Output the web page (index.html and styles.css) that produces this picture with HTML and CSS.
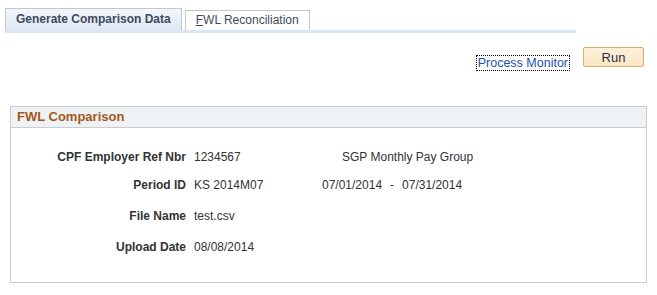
FILE: index.html
```html
<!DOCTYPE html>
<html lang="en">
<head>
  <title>Generate Comparison Data</title>
  <meta charset="utf-8">
  <link rel="stylesheet" href="styles.css">
</head>
<body>
  <div class="tabs">
    <span class="tab active">Generate Comparison Data</span>
    <span class="tab"><u>F</u>WL Reconciliation</span>
  </div>

  <div class="toolbar">
    <a class="process-link" href="#">Process Monitor</a>
    <button type="button" class="run-button">Run</button>
  </div>

  <section class="group">
    <h2 class="group-title">FWL Comparison</h2>
    <div class="group-body">
      <div class="field-row">
        <span class="field-label">CPF Employer Ref Nbr</span>
        <span class="field-value">1234567</span>
        <span class="field-extra extra-group">SGP Monthly Pay Group</span>
      </div>
      <div class="field-row">
        <span class="field-label">Period ID</span>
        <span class="field-value">KS 2014M07</span>
        <span class="field-extra extra-dates">07/01/2014<span class="date-dash">-</span>07/31/2014</span>
      </div>
      <div class="field-row">
        <span class="field-label">File Name</span>
        <span class="field-value">test.csv</span>
      </div>
      <div class="field-row">
        <span class="field-label">Upload Date</span>
        <span class="field-value">08/08/2014</span>
      </div>
    </div>
  </section>
</body>
</html>
```

FILE: styles.css
```css
body {
  background-color: #ffffff;
  color: #333333;
  font-family: "Liberation Sans", Arial, sans-serif;
  font-size: 12px;
  margin: 0;
}

.tabs {
  border-bottom: 3px solid #dbe6f4;
  display: flex;
  align-items: flex-end;
  gap: 3px;
  margin: 8px 0 0 5px;
  width: 571px;
}

.tab {
  background-color: #ffffff;
  border: 1px solid #c4c8cc;
  border-bottom: none;
  box-sizing: border-box;
  color: #3c4a5c;
  font-size: 12px;
  height: 20px;
  line-height: 19px;
  padding: 0 10px;
}

.tab.active {
  background: linear-gradient(#f4f7fb, #dfe8f4);
  font-weight: bold;
  height: 22px;
  line-height: 21px;
}

.toolbar {
  align-items: flex-start;
  display: flex;
  justify-content: flex-end;
  margin-top: 14px;
  padding-right: 13px;
}

.process-link {
  color: #1d50b4;
  font-size: 12.5px;
  line-height: 14px;
  margin-top: 9px;
  outline: 1px dotted #000000;
  padding: 0 1px;
  text-decoration: none;
}

.run-button {
  background: linear-gradient(#fdf0d9, #fbe6c2);
  border: 1px solid #e1aa72;
  border-radius: 2px;
  color: #2c2c4a;
  font-family: inherit;
  font-size: 13px;
  height: 20px;
  margin-left: 14px;
  padding: 0;
  width: 61px;
}

.group {
  border: 1px solid #c8ccd2;
  height: 175px;
  margin: 36px 10px 0 10px;
}

.group-title {
  background-color: #eef2f4;
  border-bottom: 1px solid #c8ccd2;
  color: #a5561b;
  font-size: 13px;
  font-weight: bold;
  height: 20px;
  line-height: 20px;
  margin: 0;
  padding-left: 6px;
}

.group-body {
  padding-top: 22px;
}

.field-row {
  display: flex;
  height: 31px;
  line-height: 14px;
}

.field-row:first-child {
  height: 28px;
}

.field-label {
  font-weight: bold;
  text-align: right;
  width: 175px;
}

.field-value {
  margin-left: 8px;
  width: 120px;
}

.extra-group {
  margin-left: 28px;
}

.extra-dates {
  margin-left: 8px;
}

.date-dash {
  padding: 0 8px;
}
```
